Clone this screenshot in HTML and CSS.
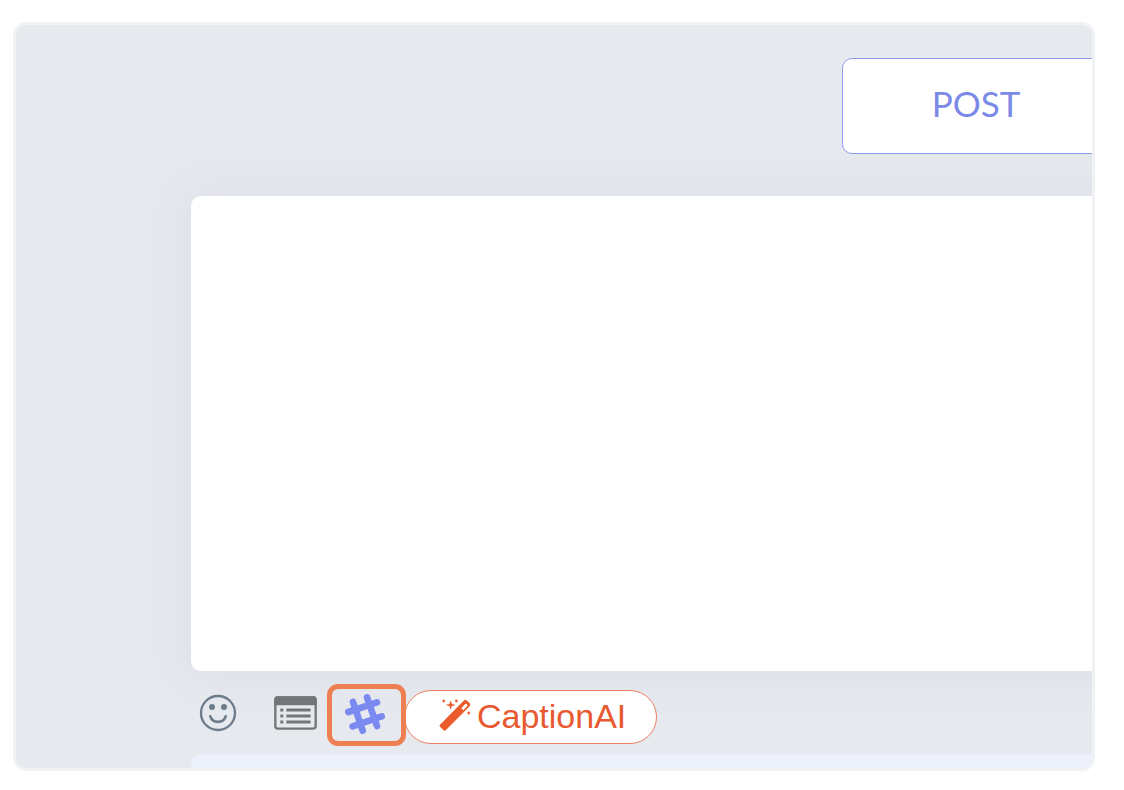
FILE: index.html
```html
<!DOCTYPE html>
<html lang="en">
<head>
  <meta charset="UTF-8" />
  <meta name="viewport" content="width=device-width, initial-scale=1.0" />
  <title>Post Editor</title>
  <link rel="stylesheet" href="styles.css">
</head>
<body>
  <main class="frame">
    <div class="tabs">
      <button class="post-btn" type="button">POST</button>
    </div>
    <textarea class="caption-input" aria-label="Caption"></textarea>
    <div class="toolbar">
      <button class="icon-btn" type="button" aria-label="Insert emoji">
        <svg width="40" height="40" viewBox="0 0 120 120" fill="none">
          <circle cx="60" cy="60" r="51" stroke="#6d7c8a" stroke-width="7"/>
          <circle cx="42" cy="42" r="9" fill="#6d7c8a"/>
          <circle cx="78" cy="42" r="9" fill="#6d7c8a"/>
          <path d="M37 70C44 92 76 92 83 70" stroke="#6d7c8a" stroke-width="8" stroke-linecap="round"/>
        </svg>
      </button>
      <button class="icon-btn list-btn" type="button" aria-label="Saved captions">
        <svg width="43" height="34" viewBox="0 0 129 102" fill="none">
          <rect x="4" y="4" width="121" height="94" rx="8" stroke="#737578" stroke-width="7"/>
          <path d="M1 28V10Q1 1 10 1H119Q128 1 128 10V28Z" fill="#737578"/>
          <path d="M37 42H110M37 60H110M37 78H110M19 42H28M19 60H28M19 78H28" stroke="#737578" stroke-width="9"/>
        </svg>
      </button>
      <button class="icon-btn hashtag-btn" type="button" aria-label="Hashtags">
        <svg width="40" height="40" viewBox="0 0 120 120" fill="none">
          <path d="M24 24L53 110M66 10L96 96M10 54L96 25M23 97L110 67" stroke="#7b8af0" stroke-width="20" stroke-linecap="round"/>
        </svg>
      </button>
      <button class="ai-btn" type="button">
        <svg width="34" height="34" viewBox="0 0 102 102" aria-hidden="true">
          <path d="M3 80L74 8Q79 3 84 8L92 15Q96 20 92 25L20 97Q17 100 14 97L3 86Q0 83 3 80Z" fill="#eb5a2b"/>
          <path d="M67 31L78 19Q81 16 84 19Q87 22 84 25L73 37Z" fill="#fff"/>
          <path d="M35 8L38 18L48 21L38 24L35 34L32 24L22 21L32 18Z" fill="#eb5a2b" stroke="#eb5a2b"/>
          <path d="M14 4L19 9L14 14L9 9ZM52 4L57 9L52 14L47 9ZM89 40L94 45L89 50L84 45Z" fill="#eb5a2b"/>
        </svg>
        <span>CaptionAI</span>
      </button>
    </div>
    <div class="next-panel"></div>
  </main>
</body>
</html>
```
FILE: styles.css
```css
* {
  box-sizing: border-box;
}
body {
  margin: 0;
  padding: 22px 29px 19px 13px;
  background: #fff;
  font-family: "Liberation Sans", Arial, sans-serif;
}
button {
  margin: 0;
  padding: 0;
  background: none;
  border: none;
  font-family: inherit;
  cursor: pointer;
}
svg {
  display: block;
}
.frame {
  display: flex;
  flex-direction: column;
  padding: 33px 0 0 175px;
  background: #e6e9ee;
  border: 3px solid #f1f2f6;
  border-radius: 13px;
  overflow: hidden;
}
/* tabs, editor and panel run off the right edge */
.tabs {
  display: flex;
  justify-content: flex-end;
  margin-right: -18px;
}
.post-btn {
  width: 268px;
  height: 96px;
  padding-bottom: 6px;
  background: #fff;
  border: 1px solid #8f9af0;
  border-radius: 10px;
  font-family: Lato, sans-serif;
  font-size: 35px;
  color: #7b8ae6;
}
.caption-input {
  display: block;
  width: calc(100% + 60px);
  height: 475px;
  margin-top: 42px;
  padding: 24px;
  background: #fff;
  border: none;
  border-radius: 10px;
  outline: none;
  resize: none;
  box-shadow: 0 0 50px rgba(130, 145, 175, 0.1);
  font-family: inherit;
  font-size: 34px;
}
.toolbar {
  display: flex;
  align-items: flex-start;
  padding: 13px 0 8px 7px;
}
.icon-btn {
  display: flex;
  align-items: center;
  justify-content: center;
  height: 58px;
}
.list-btn {
  margin: 0 10px 0 36px;
}
.hashtag-btn {
  position: relative;
  z-index: 1;
  width: 79px;
  height: 62px;
  padding: 0 3px 3px 0;
  border: 5px solid #ed7f53;
  border-radius: 11px;
}
.ai-btn {
  display: flex;
  align-items: center;
  gap: 4px;
  height: 54px;
  margin: 6px 0 0 -2px;
  padding: 0 30px 2px 34px;
  background: #fff;
  border: 1px solid #ed7f62;
  border-radius: 27px;
  font-size: 34px;
  color: #e8592f;
}
.ai-btn svg {
  margin-bottom: 2px;
}
.next-panel {
  height: 14px;
  margin-right: -60px;
  background: #ebf0fa;
  border-radius: 10px 10px 0 0;
}
```
